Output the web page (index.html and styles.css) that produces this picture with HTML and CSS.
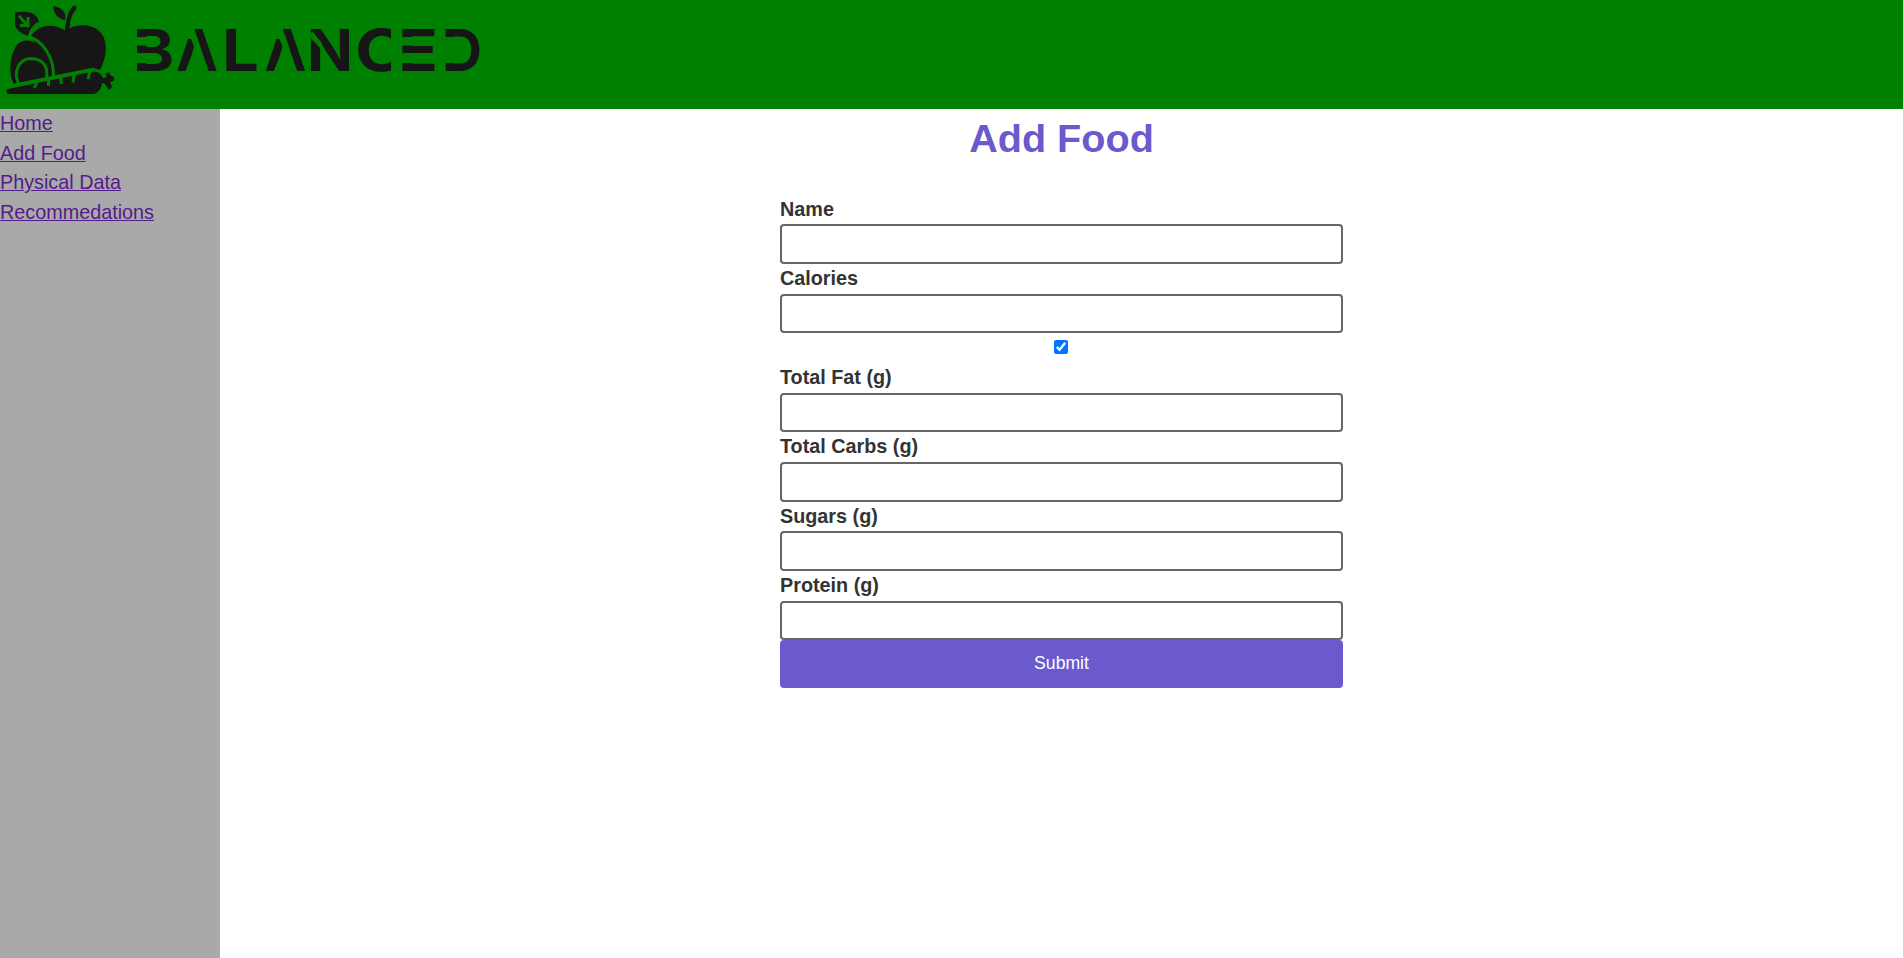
FILE: index.html
```html
<!DOCTYPE html>
<html lang="en">
<head>
<meta charset="utf-8">
<title>Balanced</title>
<link rel="stylesheet" href="styles.css">
</head>
<body>
<header class="header">
  <svg class="logo" width="500" height="109" viewBox="0 0 500 109" role="img" aria-label="Balanced">
    <g class="ink">
      <path d="M15 12.500C23 11 33 12 36 16C39 19 38.500 22 39 23C34 26 31 30 28 36C21 34 15 29 15 24Z"/>
      <path d="M31 36C37 27 50 21 66 31C76 23 91 24 99 31C109 40 107 57 100 70C97 69 94 68 90 69L52 77Z"/>
      <path d="M53 6C61 7 67 12 65 20C58 19 54 14 53 6Z"/>
      <path d="M65 34C65 20 68 11 74 5L77 8C71 15 69 22 70 34Z"/>
      <path d="M14 84C8 74 10 54 17 45C21 40 29 39 35 43C45 49 52 62 52 77Z"/>
      <path d="M8 89L91 72C98 70 102 75 103 78L107 77L105 74L109 72L110 75L114 77V81L110 82L112 87L109 90L105 84L102 83C102 88 98 93 94 94H8C6 92 6 90 8 89Z"/>
    </g>
    <g class="cut-line">
      <path d="M19 16L29 27M28 17V26M20 25.500H29"/>
      <path d="M39 23C33 26 31 31 29 37C43 41 54 57 53.500 77"/>
      <path d="M19 84C13 73 18 59 31 58.500C44 59 49 68 46 79"/>
      <path d="M37 83L34 88M48.500 79V86M60.500 77L61.500 84M74 75L73 82.500M90 71L88 79"/>
      <path d="M15 85L94 69"/>
    </g>
    <g class="wordmark">
      <text x="133" y="71" textLength="41" lengthAdjust="spacingAndGlyphs">B</text>
      <text x="176" y="71" textLength="42" lengthAdjust="spacingAndGlyphs">A</text>
      <text x="222" y="71" textLength="37" lengthAdjust="spacingAndGlyphs">L</text>
      <text x="264.500" y="71" textLength="42" lengthAdjust="spacingAndGlyphs">A</text>
      <text x="307" y="71" textLength="46" lengthAdjust="spacingAndGlyphs">N</text>
      <text x="355" y="71" textLength="52" lengthAdjust="spacingAndGlyphs">C</text>
    </g>
    <g class="cut">
      <path d="M391 26h18v48h-18z"/>
      <path d="M136 37h12v8.500h-12zM136 53h12v10h-12z"/>
      <path d="M184 28H194L209 72H185L194.500 48L191 39H184Z"/>
      <path d="M272.500 28H282.500L297.500 72H273.500L283 48L279.500 39H272.500Z"/>
      <path d="M310 33L313 32L321.500 43V48H320L310 37Z"/>
    </g>
    <g class="wordmark">
      <text x="398" y="71" textLength="40" lengthAdjust="spacingAndGlyphs">E</text>
      <text x="442" y="71" textLength="40" lengthAdjust="spacingAndGlyphs">D</text>
    </g>
    <path class="cut" d="M401 37h12v8.500h-12zM401 53h12v10h-12zM445 37h12v26h-12z"/>
  </svg>
</header>
<div class="layout">
  <nav class="sidebar">
    <a href="#">Home</a>
    <a href="#">Add Food</a>
    <a href="#">Physical Data</a>
    <a href="#">Recommedations</a>
  </nav>
  <main class="content">
    <h1 class="title">Add Food</h1>
    <form class="form">
      <label class="label" for="name">Name</label>
      <input class="field" id="name" type="text">
      <label class="label" for="calories">Calories</label>
      <input class="field" id="calories" type="text">
      <input class="check" type="checkbox" checked>
      <label class="label" for="fat">Total Fat (g)</label>
      <input class="field" id="fat" type="text">
      <label class="label" for="carbs">Total Carbs (g)</label>
      <input class="field" id="carbs" type="text">
      <label class="label" for="sugars">Sugars (g)</label>
      <input class="field" id="sugars" type="text">
      <label class="label" for="protein">Protein (g)</label>
      <input class="field" id="protein" type="text">
      <button class="submit" type="button">Submit</button>
    </form>
  </main>
</div>
</body>
</html>
```
FILE: styles.css
```css
* { box-sizing: border-box; }
body {
  margin: 0;
  height: 958px;
  display: flex;
  flex-direction: column;
  overflow: hidden;
  background: #fff;
  color: #333;
  font: 19.8px/29.6px "Liberation Sans", Arial, sans-serif;
}
.header { height: 109px; flex: none; background: #008000; }
.logo { display: block; }
.ink, .wordmark { fill: #161616; }
.cut { fill: #008000; }
.cut-line { fill: none; stroke: #008000; stroke-width: 3; }
.wordmark { font: 700 58px Inter, sans-serif; }
.layout { display: flex; flex: 1; }
.sidebar {
  width: 220px;
  display: flex;
  flex-direction: column;
  align-items: flex-start;
  background: #a9a9a9;
}
.sidebar a { color: #551a8b; text-decoration: underline; }
.content { flex: 1; display: flex; flex-direction: column; align-items: center; }
.title {
  margin: 0 0 27.7px;
  color: #6a5acd;
  font-size: 39.6px;
  line-height: 58px;
}
.form { width: 563px; display: flex; flex-direction: column; }
.label { font-weight: 700; height: 29.7px; line-height: 29.7px; }
.field {
  height: 39.6px;
  margin: 0;
  border: 2px solid #666;
  border-radius: 4px;
  background: #fff;
}
.check { width: 14px; height: 14px; margin: 6.400px auto 9.400px 274px; }
.submit {
  height: 47.7px;
  padding: 0 0 1px;
  border: 0;
  border-radius: 4px;
  background: #6a5acd;
  color: #fff;
  font: 17.6px "Liberation Sans", Arial, sans-serif;
}
```
